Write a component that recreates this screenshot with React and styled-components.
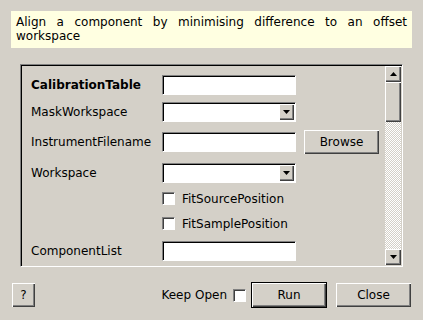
import styled, { createGlobalStyle, css } from 'styled-components';

const GlobalStyle = createGlobalStyle`
  html, body {
    margin: 0;
    padding: 0;
    background: #d4d0c8;
  }
  body {
    font-family: "DejaVu Sans", "Liberation Sans", sans-serif;
    font-size: 12px;
    color: #000;
  }
`;

const raised = css`
  background: #d4d0c8;
  box-shadow: inset 1px 1px #fff, inset -1px -1px #404040, inset -2px -2px #808080;
`;

const sunken = css`
  box-sizing: border-box;
  background: #fff;
  border: 1px solid;
  border-color: #808080 #fff #fff #808080;
  box-shadow: inset 1px 1px #000;
`;

const properties = [
  { name: 'CalibrationTable', kind: 'text', bold: true, h: 28 },
  { name: 'MaskWorkspace', kind: 'combo', h: 26 },
  { name: 'InstrumentFilename', kind: 'file', h: 34 },
  { name: 'Workspace', kind: 'combo', h: 27 },
  { name: 'FitSourcePosition', kind: 'check', h: 25 },
  { name: 'FitSamplePosition', kind: 'check', h: 25 },
  { name: 'ComponentList', kind: 'text', h: 30 },
];

const Arrow = ({ up }) => (
  <svg width="7" height="4" viewBox="0 0 7 4">
    <polygon points={up ? '0,4 7,4 3.5,0' : '0,0 7,0 3.5,4'} fill="#000" />
  </svg>
);

const App = () => (
  <Dialog>
    <GlobalStyle />
    <Description>
      Align a component by minimising difference to an offset workspace
    </Description>

    <Frame>
      <Rows>
        {properties.map(p => (
          <Row key={p.name} $h={p.h}>
            {p.kind === 'check' ? (
              <CheckLine>
                <CheckBox />
                {p.name}
              </CheckLine>
            ) : (
              <>
                <Label $bold={p.bold}>{p.name}</Label>
                {p.kind === 'combo' ? (
                  <Combo>
                    <ComboButton>
                      <Arrow />
                    </ComboButton>
                  </Combo>
                ) : (
                  <TextField type="text" readOnly />
                )}
                {p.kind === 'file' && <PushButton $w={75}>Browse</PushButton>}
              </>
            )}
          </Row>
        ))}
      </Rows>
      <ScrollBar>
        <ScrollButton>
          <Arrow up />
        </ScrollButton>
        <Thumb />
        <Trough />
        <ScrollButton>
          <Arrow />
        </ScrollButton>
      </ScrollBar>
    </Frame>

    <Footer>
      <PushButton $w={23}>?</PushButton>
      <KeepOpen>
        Keep Open
        <CheckBox />
      </KeepOpen>
      <PushButton $w={76} $default>
        Run
      </PushButton>
      <PushButton $w={75} $gap={9}>
        Close
      </PushButton>
    </Footer>
  </Dialog>
);

const Dialog = styled.div`
  width: 423px;
  height: 320px;
  box-sizing: border-box;
  padding: 11px;
  display: flex;
  flex-direction: column;
`;

const Description = styled.p`
  margin: 0;
  height: 37px;
  box-sizing: border-box;
  padding: 4px 5px 0;
  background: #ffffe1;
  line-height: 14px;
  text-align: justify;
`;

const Frame = styled.div`
  margin: 16px 9px 0;
  height: 203px;
  box-sizing: border-box;
  border: 1px solid;
  border-color: #808080 #fff #fff #808080;
  box-shadow: inset 1px 1px #000;
  padding: 1px;
  display: flex;
`;

const Rows = styled.div`
  flex: 1;
  padding: 5px 0 0 9px;
  overflow: hidden;
`;

const Row = styled.div`
  height: ${p => p.$h}px;
  display: grid;
  grid-template-columns: 131px 134px auto;
  align-items: center;
  justify-items: start;
`;

const Label = styled.span`
  font-weight: ${p => (p.$bold ? 700 : 400)};
  white-space: nowrap;
`;

const TextField = styled.input`
  ${sunken};
  width: 134px;
  height: 20px;
  margin: 0;
  padding: 0 3px;
  font: inherit;
  outline: none;
`;

const Combo = styled.div`
  ${sunken};
  width: 134px;
  height: 20px;
  padding: 1px;
  display: flex;
  justify-content: flex-end;
`;

const ComboButton = styled.div`
  ${raised};
  width: 15px;
  height: 16px;
  display: flex;
  align-items: center;
  justify-content: center;
`;

const CheckLine = styled.label`
  grid-column: 2 / span 2;
  display: flex;
  align-items: center;
  gap: 7px;
  white-space: nowrap;
`;

const CheckBox = styled.span`
  ${sunken};
  display: inline-block;
  width: 13px;
  height: 13px;
  box-shadow: inset 1px 1px #404040;
`;

const PushButton = styled.button`
  ${raised};
  width: ${p => p.$w}px;
  height: 24px;
  margin: 0 0 0 ${p => p.$gap || 0}px;
  padding: 0;
  border: none;
  font: inherit;
  color: #000;
  grid-column: 3;
  margin-left: ${p => (p.$w === 75 && !p.$gap ? 8 : p.$gap || 0)}px;

  ${p =>
    p.$default &&
    css`
      height: 26px;
      border: 1px solid #000;
    `}
`;

const ScrollBar = styled.div`
  width: 16px;
  display: flex;
  flex-direction: column;
`;

const ScrollButton = styled.div`
  ${raised};
  height: 16px;
  display: flex;
  align-items: center;
  justify-content: center;
`;

const Thumb = styled.div`
  ${raised};
  height: 40px;
`;

const Trough = styled.div`
  flex: 1;
  background: repeating-conic-gradient(#fff 0 25%, #d4d0c8 0 50%) 0 0 / 2px 2px;
`;

const Footer = styled.div`
  margin-top: 15px;
  height: 26px;
  padding: 0 1px;
  display: flex;
  align-items: center;
`;

const KeepOpen = styled.label`
  margin-left: auto;
  margin-right: 5px;
  display: flex;
  align-items: center;
  gap: 6px;
`;

export default App;
